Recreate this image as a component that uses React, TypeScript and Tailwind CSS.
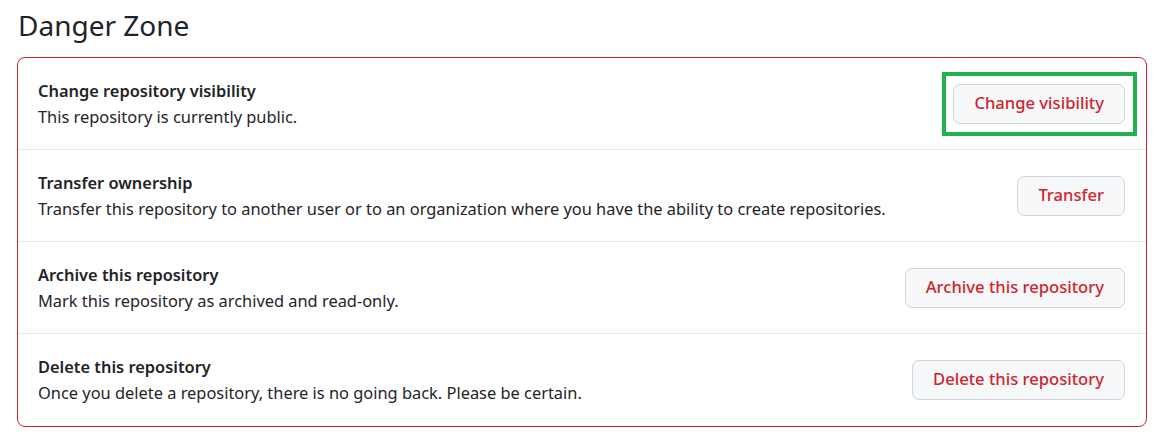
const ROWS = [
  {
    title: 'Change repository visibility',
    desc: 'This repository is currently public.',
    action: 'Change visibility',
    highlight: true,
  },
  {
    title: 'Transfer ownership',
    desc: 'Transfer this repository to another user or to an organization where you have the ability to create repositories.',
    action: 'Transfer',
  },
  {
    title: 'Archive this repository',
    desc: 'Mark this repository as archived and read-only.',
    action: 'Archive this repository',
  },
  {
    title: 'Delete this repository',
    desc: 'Once you delete a repository, there is no going back. Please be certain.',
    action: 'Delete this repository',
  },
];

export default function App() {
  return (
    <div
      className="w-[1170px] h-[446px] bg-white pl-[17px] pr-[23px] text-[#1f2328]"
      style={{ fontFamily: '"Noto Sans", "Open Sans", sans-serif' }}
    >
      <h2 className="pt-[6px] pb-[13px] text-[28px] leading-[38px] font-normal pl-px">Danger Zone</h2>

      <div className="rounded-[8px] border border-[#cf222e]">
        {ROWS.map((row, i) => (
          <div
            key={row.title}
            className={
              'flex items-center justify-between pl-5 pr-[21px] pt-5 ' +
              (i === ROWS.length - 1 ? 'pb-[21px] ' : 'pb-5 ') +
              (i > 0 ? 'border-t border-[#e6e8eb]' : '')
            }
          >
            <div className="text-[16.4px] leading-[25.5px]">
              <div className="font-semibold">{row.title}</div>
              <div>{row.desc}</div>
            </div>
            <div className="relative shrink-0">
              <button className="h-10 px-5 rounded-[7px] border border-[#d0d7de] bg-[#f6f8fa] text-[16.6px] font-medium text-[#d1242f]">
                {row.action}
              </button>
              {/* annotation frame */}
              {row.highlight && (
                <span className="absolute -top-3 -bottom-3 -left-[11px] -right-3 border-4 border-[#22b14c] pointer-events-none" />
              )}
            </div>
          </div>
        ))}
      </div>
    </div>
  );
}
